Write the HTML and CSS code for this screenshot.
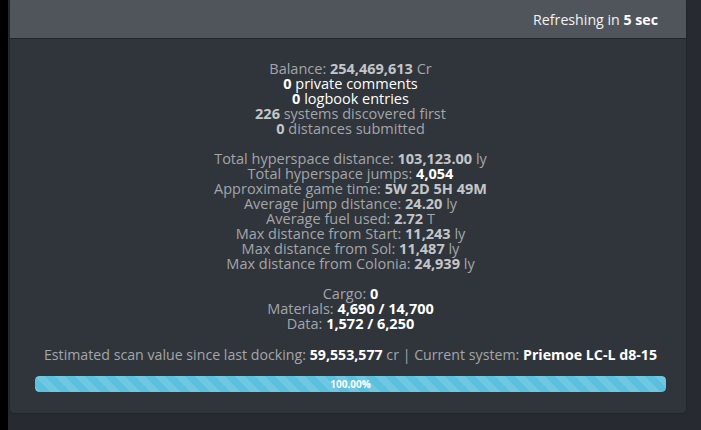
FILE: index.html
```html
<!DOCTYPE html>
<html>
<head>
<meta charset="utf-8">
<link rel="stylesheet" href="styles.css">
</head>
<body>
<div class="page">
  <div class="panel">
    <div class="panel-header">Refreshing in <b>5 sec</b></div>
    <div class="panel-body">
      <div class="group">
        <div class="line">Balance: <b>254,469,613</b> Cr</div>
        <div class="line hi"><b>0</b> private comments</div>
        <div class="line hi"><b>0</b> logbook entries</div>
        <div class="line"><b>226</b> systems discovered first</div>
        <div class="line"><b>0</b> distances submitted</div>
      </div>
      <div class="group">
        <div class="line">Total hyperspace distance: <b>103,123.00</b> ly</div>
        <div class="line">Total hyperspace jumps: <b class="w">4,054</b></div>
        <div class="line">Approximate game time: <b>5W 2D 5H 49M</b></div>
        <div class="line">Average jump distance: <b>24.20</b> ly</div>
        <div class="line">Average fuel used: <b>2.72</b> T</div>
        <div class="line">Max distance from Start: <b>11,243</b> ly</div>
        <div class="line">Max distance from Sol: <b>11,487</b> ly</div>
        <div class="line">Max distance from Colonia: <b>24,939</b> ly</div>
      </div>
      <div class="group">
        <div class="line">Cargo: <b class="w">0</b></div>
        <div class="line">Materials: <b class="w">4,690 / 14,700</b></div>
        <div class="line">Data: <b class="w">1,572 / 6,250</b></div>
      </div>
      <div class="scan">Estimated scan value since last docking: <b class="w">59,553,577</b> cr | Current system: <b class="w">Priemoe LC-L d8-15</b></div>
      <div class="progress">
        <div class="progress-bar" style="width: 100%">100.00%</div>
      </div>
    </div>
  </div>
</div>
</body>
</html>
```

FILE: styles.css
```css
html, body {
  margin: 0;
  padding: 0;
}
body {
  background: #272a30;
  font-family: "Open Sans", "Noto Sans", sans-serif;
  font-size: 14.5px;
  color: #a3a6aa;
  height: 430px;
  overflow: hidden;
  border-left: 8px solid #000;
}
.page {
  padding: 0 15px 0 2px;
}
.panel {
  background: #30343b;
  border-radius: 0 0 4px 4px;
  height: 413px;
  box-shadow: 0 0 2px rgba(0,0,0,0.4);
}
.panel-header {
  background: #50555c;
  height: 39px;
  box-sizing: border-box;
  border-bottom: 1px solid #22252a;
  display: flex;
  align-items: center;
  justify-content: flex-end;
  padding-right: 28px;
  color: #f2f2f2;
  font-size: 14.2px;
  white-space: pre;
}
.panel-header b {
  font-weight: 700;
  color: #ffffff;
}
.panel-body {
  padding: 22px 20px 0 25px;
  text-align: center;
}
.group {
  margin-bottom: 15px;
}
.line {
  line-height: 15px;
  height: 15px;
  white-space: nowrap;
}
b {
  font-weight: 700;
  color: #c3c6c9;
}
.hi, .hi b, b.w {
  color: #ffffff;
}
.scan {
  margin-top: 16px;
  line-height: 15px;
  white-space: nowrap;
  font-size: 14.2px;
}
.progress {
  margin-top: 14px;
  height: 16px;
  border-radius: 4px;
  background: #262930;
  overflow: hidden;
}
.progress-bar {
  height: 100%;
  background-color: #5bc0de;
  background-image: linear-gradient(45deg, rgba(255,255,255,0.12) 25%, transparent 25%, transparent 50%, rgba(255,255,255,0.12) 50%, rgba(255,255,255,0.12) 75%, transparent 75%, transparent);
  background-size: 20px 20px;
  color: #fff;
  font-size: 10px;
  font-weight: 700;
  line-height: 16px;
  text-align: center;
  border-radius: 4px;
}
```
